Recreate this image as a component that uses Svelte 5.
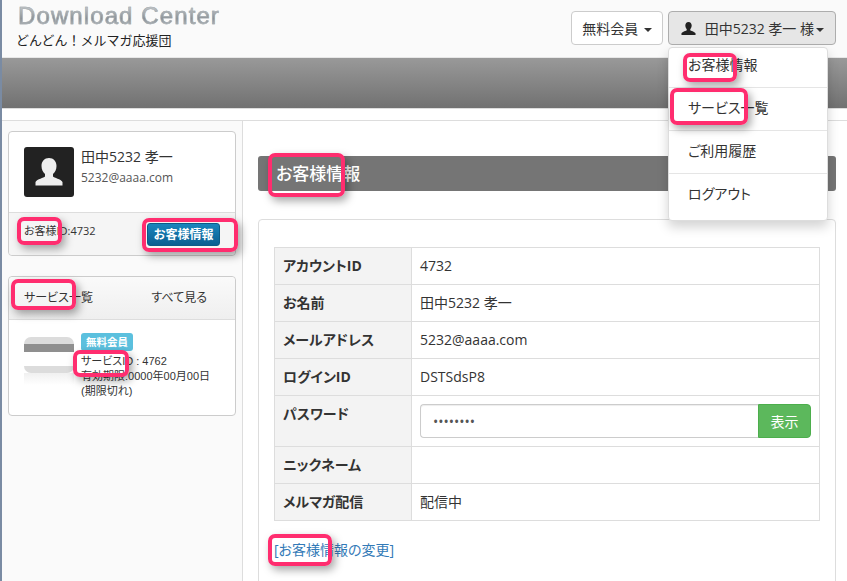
<script>
    const marks = [
        { x: 683, y: 53, w: 54, h: 29 },
        { x: 670, y: 88, w: 78, h: 37 },
        { x: 268, y: 153, w: 77, h: 44 },
        { x: 268, y: 534, w: 64, h: 32 },
        { x: 17, y: 217, w: 45, h: 28 },
        { x: 142, y: 218, w: 96, h: 34 },
        { x: 11, y: 279, w: 65, h: 31 },
        { x: 73, y: 350, w: 56, h: 27 }
    ];
    const menu = ["お客様情報", "サービス一覧", "ご利用履歴", "ログアウト"];
    const rows = [
        ["アカウントID", "4732"],
        ["お名前", "田中5232 孝一"],
        ["メールアドレス", "5232@aaaa.com"],
        ["ログインID", "DSTSdsP8"],
        ["パスワード", null],
        ["ニックネーム", ""],
        ["メルマガ配信", "配信中"]
    ];
</script>

<div class="page">
    <header class="top">
        <div class="brand">
            <div class="logo">Download Center</div>
            <div class="tagline">どんどん！メルマガ応援団</div>
        </div>
        <div class="actions">
            <button class="btn">無料会員 <span class="caret"></span></button>
            <button class="btn open">
                <svg class="user" viewBox="0 0 16 16" width="15" height="15"><path fill="#222" d="M8 1c2.100 0 3.400 1.600 3.400 3.800 0 1.500-.7 3-1.500 3.800v1.200c.3.500 4.600 1.400 5.600 3.200V15H.5v-2c1-1.800 5.300-2.700 5.600-3.200V8.600C5.300 7.800 4.600 6.300 4.600 4.800 4.600 2.600 5.900 1 8 1z"/></svg>
                田中5232 孝一 様<span class="caret"></span>
            </button>
        </div>
        <ul class="menu">
            {#each menu as item}
                <li>{item}</li>
            {/each}
        </ul>
    </header>
    <div class="band"></div>
    <div class="gap"></div>

    <div class="main">
        <aside class="side">
            <section class="card">
                <div class="profile">
                    <div class="avatar">
                        <svg viewBox="0 0 50 50" width="50" height="50"><path fill="#eee" d="M25 11c4.500 0 7.500 3.500 7.500 8 0 3.500-1.500 6.500-3.500 8v2.500c1 1.500 8 2.500 9.500 5.500v3.500h-27V35c1.500-3 8.500-4 9.500-5.500V27c-2-1.500-3.500-4.500-3.500-8 0-4.500 3-8 7.500-8z"/></svg>
                    </div>
                    <div>
                        <div class="who">田中5232 孝一</div>
                        <div class="mail">5232@aaaa.com</div>
                    </div>
                </div>
                <div class="foot">
                    <span class="cid">お客様ID:4732</span>
                    <button class="info">お客様情報</button>
                </div>
            </section>

            <section class="card services">
                <div class="svc-head">
                    <span>サービス一覧</span>
                    <span>すべて見る</span>
                </div>
                <div class="svc-body">
                    <div>
                        <div class="thumb">
                            <div class="stripe"></div>
                            <div class="blank"></div>
                        </div>
                        <div class="reflect"></div>
                    </div>
                    <div class="svc-text">
                        <span class="badge">無料会員</span>
                        <div>サービスID : 4762</div>
                        <div>有効期限:0000年00月00日</div>
                        <div>(期限切れ)</div>
                    </div>
                </div>
            </section>
        </aside>

        <main class="content">
            <h2>お客様情報</h2>
            <section class="panel">
                <table>
                    <tbody>
                        {#each rows as row}
                            <tr>
                                <th>{row[0]}</th>
                                <td>
                                    {#if row[1] === null}
                                        <div class="pw">
                                            <input type="text" value="••••••••" readonly />
                                            <button>表示</button>
                                        </div>
                                    {:else}
                                        {row[1]}
                                    {/if}
                                </td>
                            </tr>
                        {/each}
                    </tbody>
                </table>
                <a href="#change">[お客様情報の変更]</a>
            </section>
        </main>
    </div>

    {#each marks as m}
        <div class="mark" style="left:{m.x}px;top:{m.y}px;width:{m.w}px;height:{m.h}px"></div>
    {/each}
</div>

<style>
    :global(body) {
        margin: 0;
        background: #fff;
    }
    .page {
        position: relative;
        width: 847px;
        height: 581px;
        overflow: hidden;
        box-sizing: border-box;
        border-left: 2px solid #7a8ba3;
        font-family: "Open Sans", "Noto Sans CJK JP", sans-serif;
        font-size: 14px;
        font-feature-settings: "palt";
        color: #333;
    }
    .page * {
        box-sizing: border-box;
    }
    .top {
        position: relative;
        display: flex;
        justify-content: space-between;
        height: 58px;
        padding: 0 11px 0 14px;
        background: #fafafa;
        border-bottom: 1px solid #e7e7e7;
    }
    .logo {
        margin-top: 3px;
        font-family: "Liberation Sans", sans-serif;
        font-size: 24px;
        line-height: 26px;
        letter-spacing: 1.1px;
        padding-left: 2px;
        background: linear-gradient(#d4d8da, #8a9196 60%, #c4c9cc);
        -webkit-background-clip: text;
        background-clip: text;
        color: transparent;
        -webkit-text-stroke: 0.5px #a3a9ad;
    }
    .tagline {
        margin-top: 1px;
        font-size: 13px;
        line-height: 20px;
        font-feature-settings: normal;
        color: #222;
    }
    .actions {
        display: flex;
        gap: 5px;
        padding-top: 11px;
    }
    .btn {
        height: 34px;
        width: 92px;
        padding: 0;
        font: inherit;
        color: #333;
        background: #fff;
        border: 1px solid #ccc;
        border-radius: 4px;
    }
    .btn.open {
        width: 168px;
        padding: 0 0 0 12px;
        text-align: left;
        white-space: nowrap;
        background: #e6e6e6;
        border-color: #adadad;
    }
    .user {
        margin-right: 5px;
        vertical-align: -2px;
    }
    .caret {
        display: inline-block;
        margin-left: 2px;
        vertical-align: middle;
        border-top: 4px solid #333;
        border-left: 4px solid transparent;
        border-right: 4px solid transparent;
    }
    .menu {
        position: absolute;
        z-index: 2;
        top: 47px;
        left: 666px;
        width: 160px;
        height: 174px;
        margin: 0;
        padding: 0;
        list-style: none;
        background: #fff;
        border: 1px solid #ddd;
        border-radius: 4px;
        box-shadow: 0 6px 12px rgba(0, 0, 0, 0.175);
    }
    .menu li {
        height: 43px;
        padding: 0 19px;
        line-height: 40px;
        border-bottom: 1px solid #e5e5e5;
    }
    .menu li:first-child {
        height: 40px;
        line-height: 34px;
    }
    .menu li:last-child {
        border-bottom: 0;
    }
    .band {
        height: 50px;
        background: linear-gradient(#999, #717171);
    }
    .gap {
        height: 13px;
        border-top: 1px solid #ddd;
        border-bottom: 1px solid #ddd;
    }
    .main {
        display: flex;
        height: 460px;
    }
    .side {
        flex: none;
        width: 241px;
        padding: 10px 6px 0 6px;
        background: #fafafa;
        border-right: 1px solid #ddd;
    }
    .card {
        background: #fff;
        border: 1px solid #ccc;
        border-radius: 4px;
    }
    .profile {
        display: flex;
        gap: 7px;
        height: 80px;
        padding: 15px;
    }
    .avatar {
        flex: none;
        width: 50px;
        height: 50px;
        background: #222;
        border-radius: 3px;
    }
    .who {
        font-size: 14px;
        line-height: 20px;
    }
    .mail {
        margin-top: 2px;
        font-size: 12px;
        line-height: 17px;
        color: #555;
    }
    .foot {
        display: flex;
        justify-content: space-between;
        height: 43px;
        padding: 9px 15px;
        background: #f5f5f5;
        border-top: 1px solid #ddd;
        border-radius: 0 0 4px 4px;
    }
    .cid {
        font-size: 11px;
        line-height: 18px;
    }
    .info {
        width: 73px;
        height: 23px;
        margin-top: 1px;
        padding: 0 0 1px;
        font: bold 12px "Open Sans", "Noto Sans CJK JP", sans-serif;
        color: #fff;
        background: linear-gradient(#1a85bd, #0b5f91);
        border: 1px solid #0c5c88;
        border-radius: 3px;
    }
    .services {
        height: 140px;
        margin-top: 20px;
    }
    .svc-head {
        display: flex;
        justify-content: space-between;
        height: 43px;
        padding: 0 28px 0 15px;
        font-size: 12px;
        line-height: 41px;
        white-space: nowrap;
        background: linear-gradient(#fafafa, #efefef);
        border-bottom: 1px solid #ddd;
        border-radius: 4px 4px 0 0;
    }
    .svc-body {
        display: flex;
        gap: 7px;
        padding: 13px 15px;
    }
    .thumb {
        width: 50px;
        height: 36px;
        margin-top: 4px;
        padding-top: 7px;
        background: #dcdcdc;
        border-radius: 7px;
        overflow: hidden;
    }
    .stripe {
        height: 8px;
        background: #8f8f8f;
    }
    .blank {
        height: 14px;
        background: #fff;
    }
    .reflect {
        height: 12px;
        background: linear-gradient(#f0f0f0, #fff);
    }
    .svc-text {
        font-family: "Liberation Sans", "Noto Sans CJK JP", sans-serif;
        font-size: 11px;
        line-height: 15px;
        white-space: nowrap;
    }
    .badge {
        display: block;
        width: 52px;
        height: 18px;
        margin-bottom: 3px;
        font-size: 10.5px;
        font-weight: bold;
        line-height: 18px;
        text-align: center;
        color: #fff;
        background: #5bc0de;
        border-radius: 3px;
    }
    .content {
        flex: 1;
        padding: 35px 11px 0 15px;
    }
    h2 {
        height: 35px;
        margin: 0 0 28px;
        padding-left: 18px;
        font-size: 17px;
        font-weight: 500;
        line-height: 35px;
        color: #fff;
        background: #757575;
        border-radius: 3px;
    }
    .panel {
        height: 400px;
        padding: 27px 15px;
        background: #fff;
        border: 1px solid #ddd;
        border-radius: 4px;
    }
    table {
        width: 546px;
        border-collapse: collapse;
    }
    th, td {
        height: 37px;
        padding: 0 8px 2px;
        text-align: left;
        border: 1px solid #ddd;
    }
    th {
        width: 137px;
        background: #f3f3f3;
        font-weight: bold;
        color: #333;
    }
    tr:nth-child(5) {
        height: 51px;
    }
    tr:nth-child(5) th {
        vertical-align: top;
        padding-top: 7px;
    }
    tr:nth-child(5) td {
        padding-bottom: 0;
    }
    .pw {
        display: flex;
        height: 34px;
    }
    .pw input {
        flex: 1;
        min-width: 0;
        padding: 0 12px;
        font: inherit;
        color: #555;
        background: #fff;
        border: 1px solid #ccc;
        border-right: 0;
        border-radius: 4px 0 0 4px;
        box-shadow: inset 0 1px 1px rgba(0, 0, 0, 0.075);
    }
    .pw button {
        width: 53px;
        font: inherit;
        color: #fff;
        background: #5cb85c;
        border: 1px solid #4cae4c;
        border-radius: 0 4px 4px 0;
    }
    a {
        display: block;
        margin-top: 18px;
        color: #337ab7;
        text-decoration: none;
    }
    .mark {
        position: absolute;
        z-index: 3;
        margin-left: -2px;
        border: 4px solid #ff2d6f;
        border-radius: 7px;
        box-shadow: 3px 4px 8px rgba(0, 0, 0, 0.35);
    }
</style>
